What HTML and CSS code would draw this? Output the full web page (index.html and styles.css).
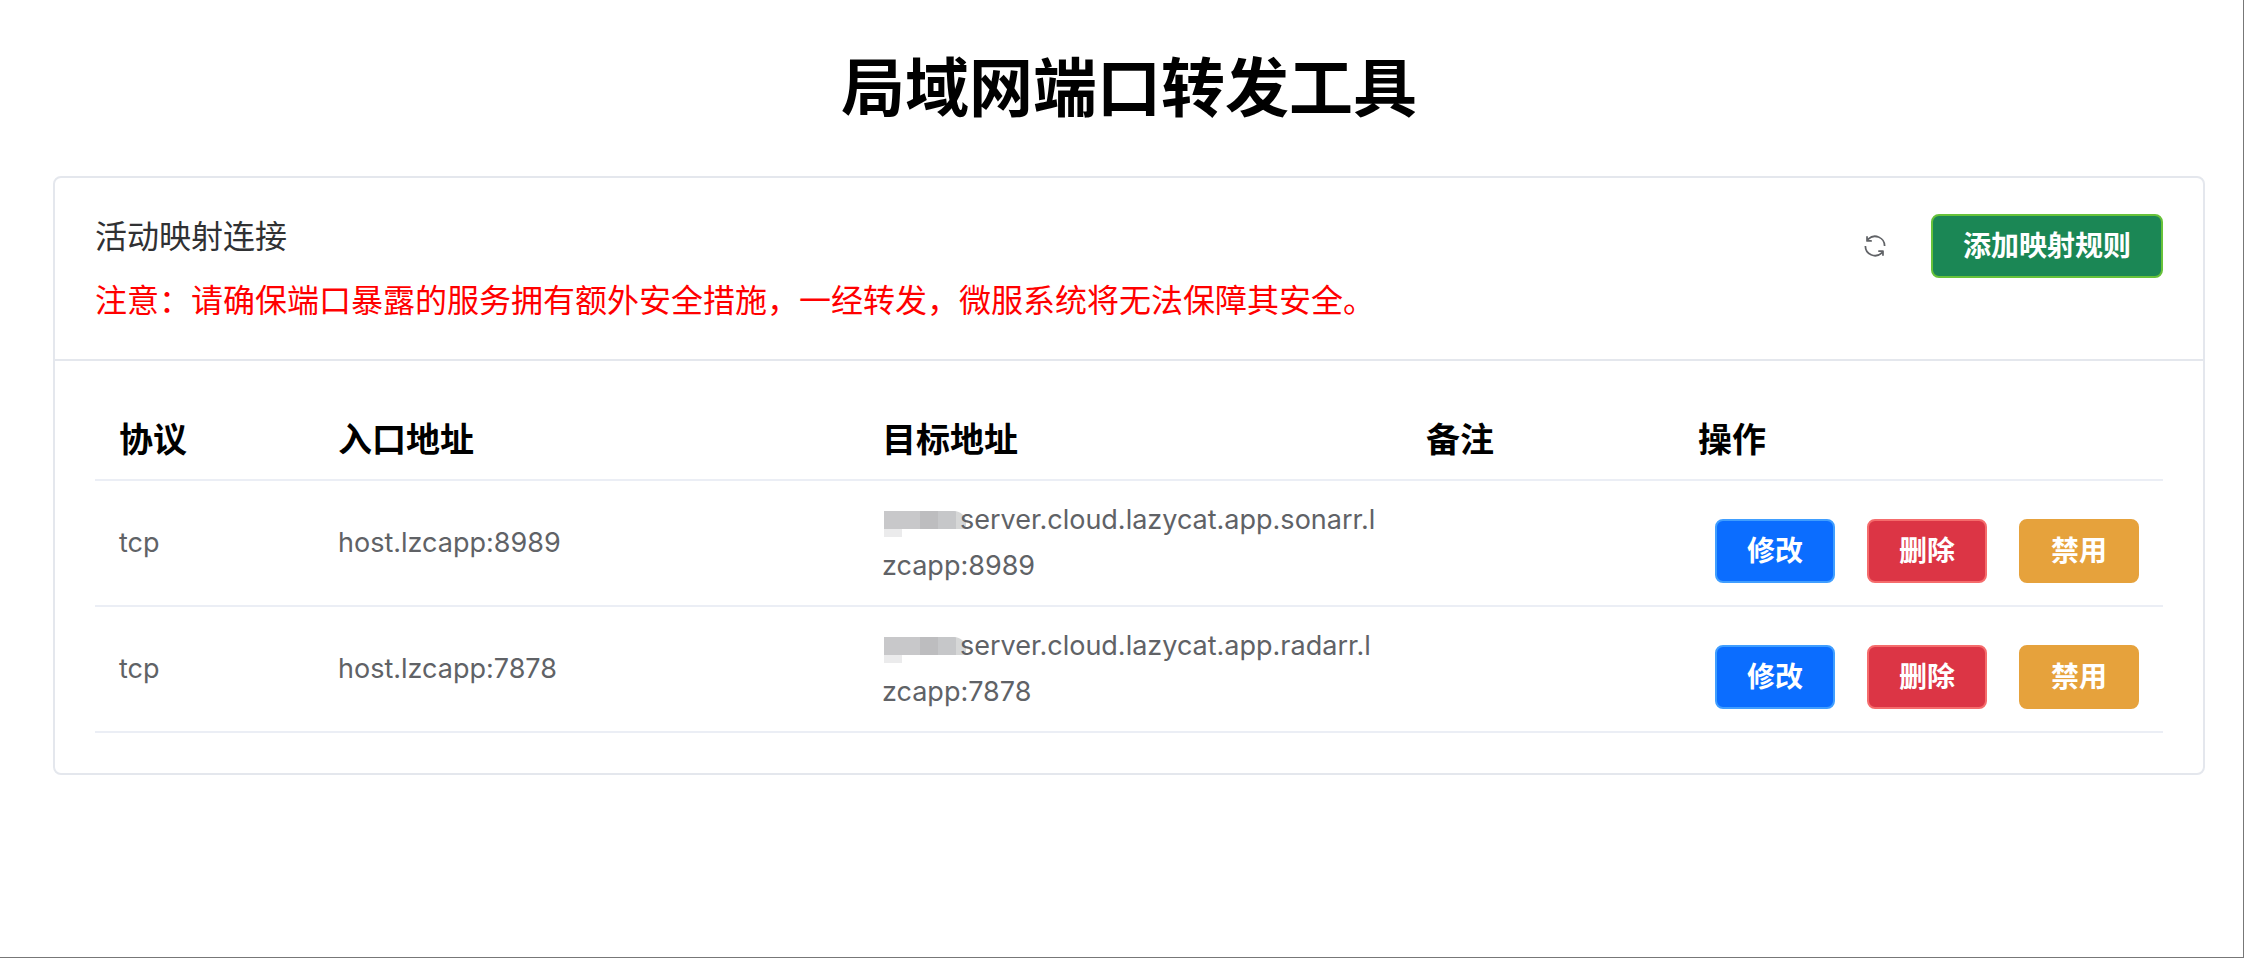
FILE: index.html
```html
<!DOCTYPE html>
<html lang="zh-CN">

<head>
    <meta charset="UTF-8">
    <title>局域网端口转发工具</title>
    <link rel="stylesheet" href="styles.css">
</head>

<body>
    <h1>局域网端口转发工具</h1>

    <div class="card">
        <div class="card-header">
            <div class="info">
                <p>活动映射连接</p>
                <p class="warning">注意：请确保端口暴露的服务拥有额外安全措施，一经转发，微服系统将无法保障其安全。</p>
            </div>
            <div class="tools">
                <button class="btn-refresh" aria-label="刷新">
                    <svg viewBox="0 0 1024 1024">
                        <path fill="currentColor" d="M771.776 794.88A384 384 0 0 1 128 512h64a320 320 0 0 0 555.712 216.448H654.72a32 32 0 1 1 0-64h149.056a32 32 0 0 1 32 32v148.928a32 32 0 1 1-64 0v-50.56zM276.288 295.616h92.992a32 32 0 0 1 0 64H220.16a32 32 0 0 1-32-32V178.56a32 32 0 0 1 64 0v50.56A384 384 0 0 1 896.128 512h-64a320 320 0 0 0-555.776-216.384z" />
                    </svg>
                </button>
                <button class="btn btn-add">添加映射规则</button>
            </div>
        </div>

        <div class="card-body">
            <table>
                <colgroup>
                    <col class="col-protocol">
                    <col class="col-address">
                    <col class="col-address">
                    <col class="col-remark">
                    <col class="col-action">
                </colgroup>
                <thead>
                    <tr>
                        <th>协议</th>
                        <th>入口地址</th>
                        <th>目标地址</th>
                        <th>备注</th>
                        <th>操作</th>
                    </tr>
                </thead>
                <tbody>
                    <tr>
                        <td>tcp</td>
                        <td>host.lzcapp:8989</td>
                        <td><span class="mosaic"></span>server.cloud.lazycat.app.sonarr.l<wbr>zcapp:8989</td>
                        <td></td>
                        <td>
                            <div class="actions">
                                <button class="btn btn-edit">修改</button>
                                <button class="btn btn-delete">删除</button>
                                <button class="btn btn-disable">禁用</button>
                            </div>
                        </td>
                    </tr>
                    <tr>
                        <td>tcp</td>
                        <td>host.lzcapp:7878</td>
                        <td><span class="mosaic"></span>server.cloud.lazycat.app.radarr.l<wbr>zcapp:7878</td>
                        <td></td>
                        <td>
                            <div class="actions">
                                <button class="btn btn-edit">修改</button>
                                <button class="btn btn-delete">删除</button>
                                <button class="btn btn-disable">禁用</button>
                            </div>
                        </td>
                    </tr>
                </tbody>
            </table>
        </div>
    </div>
</body>

</html>
```

FILE: styles.css
```css
* {
    box-sizing: border-box;
}

body {
    margin: 0;
    min-height: 100vh;
    padding: 42px 38px 42px 53px;
    border-right: 1px solid #777;
    border-bottom: 1px solid #777;
    background-color: #fff;
    color: #606266;
    font-family: Inter, "Noto Sans CJK SC", sans-serif;
    font-size: 27px;
    line-height: 46px;
}

h1 {
    margin: 0 0 42px;
    color: #000;
    font-size: 64px;
    line-height: 92px;
    text-align: center;
}

.card {
    border: 2px solid #e4e7ed;
    border-radius: 8px;
}

.card-header {
    display: flex;
    justify-content: space-between;
    align-items: flex-start;
    padding: 36px 40px 35px;
    border-bottom: 2px solid #e4e7ed;
}

.info {
    color: #303133;
    font-size: 32px;
}

.info p {
    margin: 0;
}

.info .warning {
    margin-top: 18px;
    color: red;
}

.tools {
    display: flex;
    gap: 24px;
}

.btn,
.btn-refresh {
    height: 64px;
    border: 2px solid transparent;
    border-radius: 8px;
    font-family: inherit;
    cursor: pointer;
}

.btn {
    padding: 0 30px;
    color: #fff;
    font-size: 28px;
    font-weight: bold;
    line-height: 46px;
    white-space: nowrap;
}

.btn-refresh {
    display: flex;
    justify-content: center;
    align-items: center;
    width: 64px;
    padding: 0;
    background: none;
    color: #606266;
}

.btn-refresh svg {
    width: 28px;
    height: 28px;
}

.btn-add {
    background-color: #1b8755;
    border-color: #67c23a;
}

.btn-edit {
    background-color: #0b6dff;
    border-color: #409eff;
}

.btn-delete {
    background-color: #dc3545;
    border-color: #f56c6c;
}

.btn-disable {
    background-color: #e6a23c;
    border-color: #e6a23c;
}

.card-body {
    padding: 40px;
}

table {
    width: 100%;
    table-layout: fixed;
    border-spacing: 0;
}

.col-protocol {
    width: 219px;
}

.col-address {
    width: 544px;
}

.col-remark {
    width: 272px;
}

.col-action {
    width: 489px;
}

th,
td {
    padding: 16px 24px;
    border-bottom: 2px solid #ebeef5;
    text-align: left;
}

/* the action buttons are taller than one line of text */
td {
    height: 126px;
}

th {
    color: #000;
    font-size: 34px;
}

/* hidden user name in front of the host */
.mosaic {
    display: inline-block;
    width: 82px;
    height: 26px;
    margin: 0 -6px 0 2px;
    vertical-align: -8px;
    border-top-right-radius: 12px;
    background:
        linear-gradient(#ebebec, #ebebec) 0 18px / 18px 8px no-repeat,
        linear-gradient(90deg, #c8c8ca 36px, #bdbdbf 36px, #bdbdbf 54px, #c6c7c9 54px, #c6c7c9 72px, #d6d7d7 72px) 0 0 / 100% 18px no-repeat;
}

.actions {
    display: flex;
    justify-content: flex-end;
    gap: 32px;
    padding-top: 16px;
}
```
